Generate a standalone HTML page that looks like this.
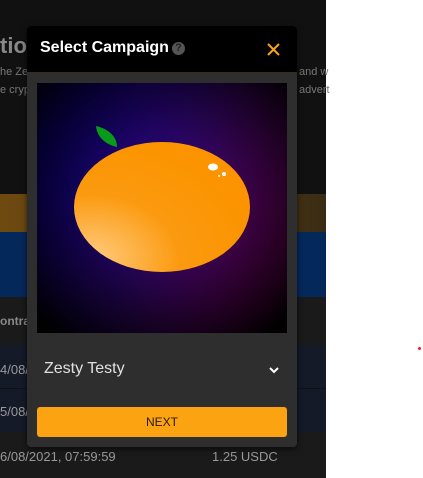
<!DOCTYPE html>
<html><head><style>
body{margin:0;width:423px;height:478px;overflow:hidden;position:relative;background:#fff;font-family:"Liberation Sans",sans-serif}
.bg{position:absolute;left:0;top:0;width:326px;height:478px;background:#111}
.a{position:absolute;left:0;width:326px}
.t{position:absolute;color:#999;font-size:14px}
.modal{position:absolute;left:27px;top:26px;width:270px;height:421px;background:#2e2e2e;border-radius:4px;overflow:hidden;box-shadow:0 2px 6px rgba(0,0,0,.6)}
.hd{height:46px;background:#000;border-bottom:1px solid #3a2e1a;position:relative}
.hd h1{position:absolute;left:13px;top:13px;margin:0;color:#fff;font-size:16px;font-weight:bold}
.q{display:inline-block;width:13px;height:13px;border-radius:50%;background:#555;color:#222;font-size:11px;text-align:center;line-height:13px;vertical-align:1px;margin-left:3px}
.img{position:absolute;left:10px;top:57px;width:250px;height:250px;background:#000}
.dd{position:absolute;left:17px;top:334px;color:#e0e0e0;font-size:16px}
.btn{position:absolute;left:10px;top:381px;width:250px;height:30px;background:#fca311;border-radius:3px;color:#2a1a00;font-size:12px;text-align:center;line-height:30px}
</style></head><body>
<div class="bg"></div>
<div class="t" style="left:0;top:33px;font-size:22px;font-weight:bold;color:#888">tion</div>
<div class="t" style="left:0;top:66px;font-size:11px;color:#777">he Zes</div>
<div class="t" style="left:0;top:84px;font-size:11px;color:#777">e crypt</div>
<div class="t" style="left:299px;top:66px;font-size:11px;color:#777">and w</div>
<div class="t" style="left:299px;top:84px;font-size:11px;color:#777">advert</div>
<div class="a" style="top:194px;height:38px;background:linear-gradient(90deg,#6e4a10,#3a2c14)"></div>
<div class="a" style="top:232px;height:65px;background:#05285a"></div>
<div class="a" style="top:297px;height:48px;background:#1a1a1a"></div>
<div class="t" style="left:0;top:314px;font-size:12px;font-weight:bold;color:#888">ontra</div>
<div class="a" style="top:345px;height:43px;background:#141a28"></div>
<div class="a" style="top:389px;height:43px;background:#141a28"></div>
<div class="a" style="top:432px;height:46px;background:#1a1a1a"></div>
<div class="t" style="left:0;top:362px;font-size:13px">4/08/</div>
<div class="t" style="left:0;top:404px;font-size:13px">5/08/</div>
<div class="t" style="left:0;top:449px;font-size:13px">6/08/2021, 07:59:59</div>
<div class="t" style="left:212px;top:449px;font-size:13px">1.25 USDC</div>
<div style="position:absolute;left:418px;top:347px;width:3px;height:3px;border-radius:50%;background:#e22"></div>
<div class="modal">
<div class="hd"><h1>Select Campaign<span class="q">?</span></h1>
<svg style="position:absolute;left:240px;top:17px" width="13" height="13" viewBox="0 0 13 13"><path d="M1 1L12 12M12 1L1 12" stroke="#fca311" stroke-width="2"/></svg></div>
<div class="img"><svg width="250" height="250" viewBox="0 0 250 250">
<defs>
<linearGradient id="bgl" x1="0" y1="0.3" x2="1" y2="0.7"><stop offset="0" stop-color="#0a0070"/><stop offset="0.5" stop-color="#2a0560"/><stop offset="1" stop-color="#600050"/></linearGradient>
<radialGradient id="vig" cx="0.5" cy="0.45" r="0.7"><stop offset="0.35" stop-color="#000" stop-opacity="0"/><stop offset="1" stop-color="#000" stop-opacity="1"/></radialGradient>
<radialGradient id="g" cx="0.1" cy="0.9" r="0.9"><stop offset="0" stop-color="#ffcc80"/><stop offset="0.55" stop-color="#fb9a10"/><stop offset="1" stop-color="#fb9400"/></radialGradient></defs>
<rect width="250" height="250" fill="url(#bgl)"/>
<rect width="250" height="250" fill="url(#vig)"/>
<path d="M59 43 C72 46 80 54 80 64 C70 62 60 55 59 43Z" fill="#0a9a1a"/>
<ellipse cx="125" cy="124" rx="88" ry="65" fill="url(#g)"/>
<ellipse cx="176" cy="84" rx="5" ry="3.5" fill="#fff"/>
<circle cx="187" cy="91" r="2" fill="#fff"/><circle cx="182" cy="93" r="1" fill="#fff"/>
</svg></div>
<div class="dd">Zesty Testy</div>
<svg style="position:absolute;left:242px;top:340px" width="10" height="8" viewBox="0 0 10 8"><path d="M1 2L5 6L9 2" stroke="#fff" stroke-width="2" fill="none"/></svg>
<div class="btn">NEXT</div>
</div>
</body></html>
